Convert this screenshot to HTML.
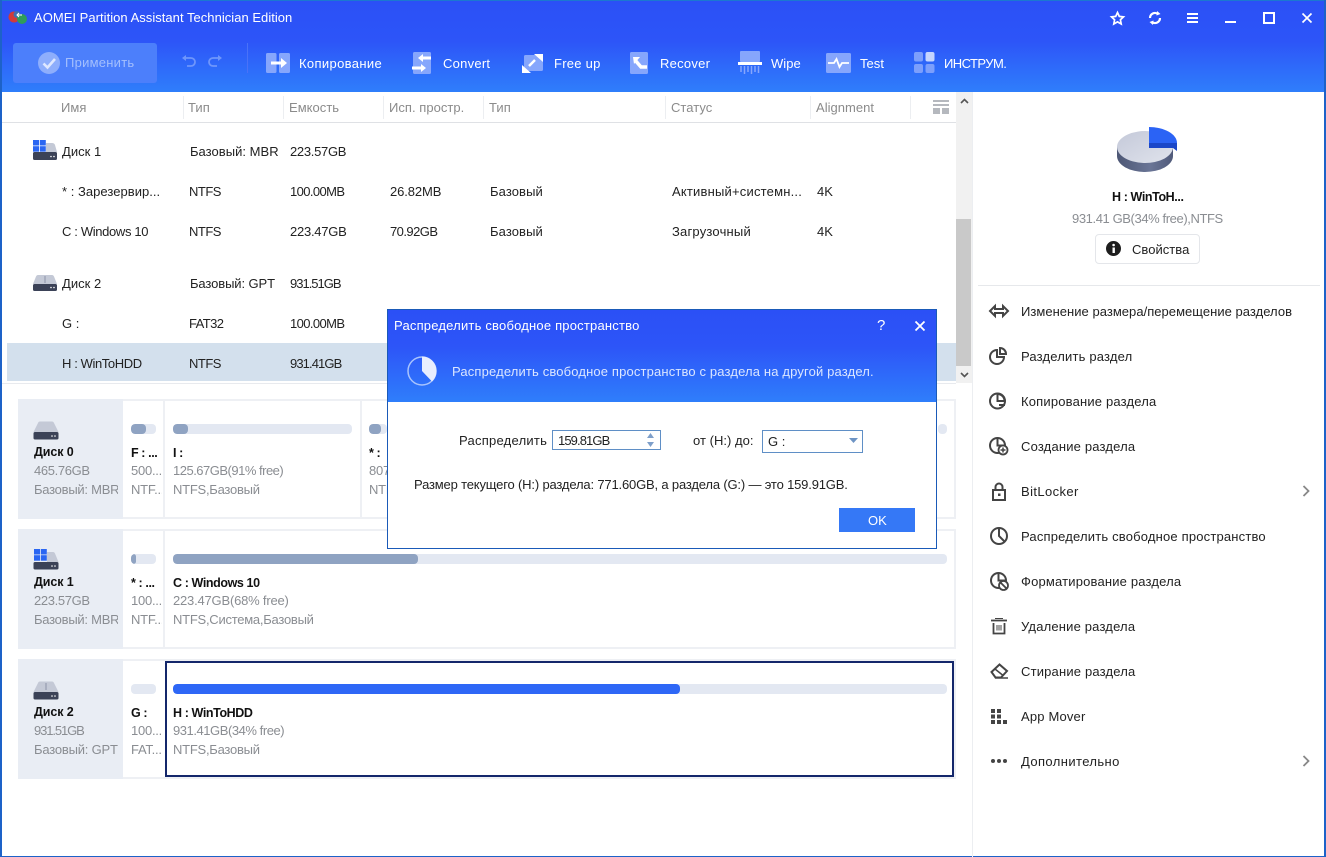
<!DOCTYPE html>
<html><head><meta charset="utf-8">
<style>
*{box-sizing:border-box;margin:0;padding:0}
html,body{width:1326px;height:857px;overflow:hidden;background:#fff}
body{position:relative;font-family:"Liberation Sans","Noto Sans CJK SC",sans-serif;font-size:13px;letter-spacing:.03px;color:#222}
.a{position:absolute}
.t{position:absolute;white-space:nowrap;line-height:16px;height:16px}
.w{color:#fff}
.tb{letter-spacing:.25px}
.h{color:#8b8b8b}
.g{color:#8a8d92;letter-spacing:-.25px}
.b{font-weight:bold;color:#111;font-size:12.5px;letter-spacing:-.1px}
.pb{font-weight:bold;color:#111;font-size:12.5px;letter-spacing:-.4px}
.r{letter-spacing:.18px}
.c{overflow:hidden}
svg{position:absolute;overflow:visible}
.sep{position:absolute;width:1px;background:#eceef1}
.bar{position:absolute;height:10px;border-radius:4px;background:#e3e8f2;overflow:hidden}
.bar i{position:absolute;left:0;top:0;bottom:0;background:#8fa3c2;border-radius:4px}
.ic{fill:none;stroke:#444;stroke-width:2}
</style></head><body>
<!-- header -->
<div class="a" style="left:0;top:0;width:1326px;height:92px;background:linear-gradient(#2b50f6,#2d55f8 45%,#2f7efb)"></div>
<div class="a" style="left:0;top:0;width:1326px;height:1px;background:#1b78d0"></div>
<div class="a" style="left:0;top:0;width:2px;height:857px;background:#1d62c8"></div>
<div class="a" style="right:0;top:0;width:2px;height:857px;background:#1d62c8"></div>
<div class="a" style="left:0;bottom:0;width:1326px;height:1px;background:#1d62c8"></div>
<!-- logo -->
<svg style="left:8px;top:10px" width="20" height="16"><circle cx="6" cy="7" r="5.500" fill="#d23a3a"/><circle cx="9" cy="4.500" r="3.500" fill="#3f6fb0"/><circle cx="14" cy="9" r="5" fill="#2f9c5a"/><path d="M9 5h5M11 3l-2 2 2 2" stroke="#fff" fill="none"/></svg>
<div class="t w" style="left:34px;top:10px">AOMEI Partition Assistant Technician Edition</div>
<!-- window controls -->
<svg style="left:1110px;top:11px" width="15" height="15" viewBox="0 0 15 15"><path d="M7.500 1.500l1.800 3.900 4.200.5-3.100 2.900.8 4.200-3.700-2.100-3.700 2.100.8-4.200L1.500 5.900l4.200-.5z" fill="none" stroke="#fff" stroke-width="1.700"/></svg>
<svg style="left:1147px;top:10px" width="16" height="16" viewBox="0 0 16 16"><path d="M3 8a5 5 0 0 1 8-4M13 8a5 5 0 0 1-8 4" fill="none" stroke="#fff" stroke-width="2.200"/><path d="M10 1l3.500 3-4 1.500zM6 15l-3.500-3 4-1.500z" fill="#fff"/></svg>
<div class="a" style="left:1187px;top:13px;width:11px;height:2px;background:#fff"></div>
<div class="a" style="left:1187px;top:17px;width:11px;height:2px;background:#fff"></div>
<div class="a" style="left:1187px;top:21px;width:11px;height:2px;background:#fff"></div>
<div class="a" style="left:1225px;top:21px;width:11px;height:2px;background:#fff"></div>
<div class="a" style="left:1263px;top:12px;width:12px;height:12px;border:2px solid #fff"></div>
<svg style="left:1302px;top:13px" width="10" height="10"><path d="M.5.5l9 9M9.500.5l-9 9" stroke="#fff" stroke-width="1.700"/></svg>
<!-- apply -->
<div class="a" style="left:13px;top:43px;width:144px;height:40px;background:#4c7ffb;border-radius:3px"></div>
<svg style="left:38px;top:52px" width="22" height="22"><circle cx="11" cy="11" r="11" fill="#8eaefc"/><path d="M5.500 11.500l4 4 7.500-8.500" fill="none" stroke="#dfe8ff" stroke-width="2.600"/></svg>
<div class="t tb" style="left:65px;top:55px;color:#a4bffd">Применить</div>
<svg style="left:181px;top:55px" width="16" height="14"><path d="M4 3h6a4 4 0 0 1 0 8H6" fill="none" stroke="#6f96fb" stroke-width="1.800"/><path d="M5 0L1 3l4 3z" fill="#6f96fb"/></svg>
<svg style="left:207px;top:55px" width="16" height="14"><path d="M12 3H6a4 4 0 0 0 0 8h4" fill="none" stroke="#6f96fb" stroke-width="1.800"/><path d="M11 0l4 3-4 3z" fill="#6f96fb"/></svg>
<div class="a" style="left:247px;top:43px;width:1px;height:30px;background:#4a72f8"></div>
<!-- toolbar -->
<svg style="left:266px;top:53px" width="24" height="20"><rect width="10.500" height="20" rx="1.500" fill="#86a6fc"/><rect x="13" width="11" height="20" rx="1.500" fill="#86a6fc"/><path d="M5 10h13" stroke="#fff" stroke-width="3"/><path d="M15 5l6 5-6 5z" fill="#fff"/></svg>
<div class="t w" style="left:299px;top:56px;letter-spacing:.35px">Копирование</div>
<svg style="left:412px;top:52px" width="20" height="22"><rect x="1" width="18" height="22" rx="1.500" fill="#86a6fc"/><path d="M10 6h9" stroke="#fff" stroke-width="3"/><path d="M11 2L6 6l5 4z" fill="#fff"/><path d="M0 16h10" stroke="#fff" stroke-width="3"/><path d="M9 12l5 4-5 4z" fill="#fff"/></svg>
<div class="t w tb" style="left:443px;top:56px">Convert</div>
<svg style="left:522px;top:53px" width="22" height="20"><rect x="2" y="2" width="19" height="16" rx="1.500" fill="#86a6fc"/><path d="M13 7l-6 6" stroke="#fff" stroke-width="2.500"/><path d="M12 1h9v8zM9 20H0v-8z" fill="#fff"/></svg>
<div class="t w tb" style="left:554px;top:56px">Free up</div>
<svg style="left:630px;top:52px" width="22" height="22"><rect width="18" height="22" rx="1.500" fill="#86a6fc"/><path d="M5 8l6 7h6" fill="none" stroke="#fff" stroke-width="3.500"/><path d="M3 5h7l-6 7z" fill="#fff"/></svg>
<div class="t w tb" style="left:660px;top:56px">Recover</div>
<svg style="left:738px;top:51px" width="24" height="24"><rect x="2" width="20" height="11" rx="1" fill="#86a6fc"/><rect y="11" width="24" height="3" fill="#fff"/><path d="M3 15v6M6.500 15v8M10 15v6M13.500 15v8M17 15v6M20.500 15v7" stroke="#86a6fc" stroke-width="1.500"/></svg>
<div class="t w" style="left:771px;top:56px">Wipe</div>
<svg style="left:826px;top:53px" width="25" height="20"><rect width="25" height="20" rx="1.500" fill="#86a6fc"/><path d="M2 10h6l2.500-4 3 8 2.500-4h7" fill="none" stroke="#fff" stroke-width="1.800"/></svg>
<div class="t w" style="left:860px;top:56px">Test</div>
<svg style="left:914px;top:52px" width="21" height="21"><rect width="9" height="9.500" rx="2" fill="#7c9ffc"/><rect x="11.500" width="9" height="9.500" rx="2" fill="#c5d5fe"/><rect y="12" width="9" height="9" rx="2" fill="#7c9ffc"/><rect x="11.500" y="12" width="9" height="9" rx="2" fill="#7c9ffc"/></svg>
<div class="t w" style="left:944px;top:56px;letter-spacing:-.55px">ИНСТРУМ.</div>
<!-- column header -->
<div class="t h" style="left:61px;top:100px">Имя</div>
<div class="t h" style="left:188px;top:100px">Тип</div>
<div class="t h" style="left:289px;top:100px">Емкость</div>
<div class="t h" style="left:389px;top:100px">Исп. простр.</div>
<div class="t h" style="left:489px;top:100px">Тип</div>
<div class="t h" style="left:671px;top:100px">Статус</div>
<div class="t h" style="left:816px;top:100px">Alignment</div>
<div class="sep" style="left:183px;top:96px;height:23px"></div>
<div class="sep" style="left:283px;top:96px;height:23px"></div>
<div class="sep" style="left:383px;top:96px;height:23px"></div>
<div class="sep" style="left:483px;top:96px;height:23px"></div>
<div class="sep" style="left:665px;top:96px;height:23px"></div>
<div class="sep" style="left:810px;top:96px;height:23px"></div>
<div class="sep" style="left:910px;top:96px;height:23px"></div>
<div class="a" style="left:2px;top:122px;width:954px;height:1px;background:#dfe1e5"></div>
<svg style="left:933px;top:100px" width="16" height="14"><path d="M0 1h16M0 5h16" stroke="#b5b8be" stroke-width="2"/><rect y="8" width="7" height="6" fill="#b5b8be"/><rect x="9" y="8" width="7" height="6" fill="#b5b8be"/></svg>
<!-- scrollbar -->
<div class="a" style="left:956px;top:92px;width:16px;height:291px;background:#f1f1f1"></div>
<div class="a" style="left:956px;top:219px;width:15px;height:147px;background:#c9c9c9"></div>
<svg style="left:960px;top:98px" width="9" height="6"><path d="M1 5l3.500-3.500L8 5" fill="none" stroke="#555" stroke-width="1.600"/></svg>
<svg style="left:960px;top:372px" width="9" height="6"><path d="M1 1l3.500 3.500L8 1" fill="none" stroke="#555" stroke-width="1.600"/></svg>
<div class="a" style="left:972px;top:92px;width:1px;height:765px;background:#eceef1"></div>
<!-- rows -->
<div class="a" style="left:7px;top:343px;width:949px;height:38px;background:#d3e0ed"></div>
<div class="a" style="left:2px;top:383px;width:954px;height:1px;background:#e8eaee"></div>
<svg style="left:33px;top:140px" width="25" height="21"><path d="M13 3h6c1.500 0 2.500.8 3 2l2 7H13z" fill="#c4c9d6"/><rect y="12" width="24" height="8" rx="1.500" fill="#3b4257"/><circle cx="18" cy="16.500" r=".8" fill="#fff"/><circle cx="21" cy="16.500" r=".8" fill="#fff"/><rect width="6" height="5.500" fill="#2a66f2"/><rect x="6.800" width="6" height="5.500" fill="#2a66f2"/><rect y="6.200" width="6" height="5.500" fill="#2a66f2"/><rect x="6.800" y="6.200" width="6" height="5.500" fill="#2a66f2"/></svg>
<div class="t" style="left:62px;top:144px">Диск 1</div>
<div class="t" style="left:190px;top:144px">Базовый: MBR</div>
<div class="t" style="left:290px;top:144px;letter-spacing:-.3px">223.57GB</div>
<div class="t" style="left:62px;top:184px">* : Зарезервир...</div>
<div class="t" style="left:189px;top:184px;letter-spacing:-.5px">NTFS</div>
<div class="t" style="left:290px;top:184px;letter-spacing:-.6px">100.00MB</div>
<div class="t" style="left:390px;top:184px;letter-spacing:-.1px">26.82MB</div>
<div class="t" style="left:490px;top:184px;letter-spacing:.1px">Базовый</div>
<div class="t" style="left:672px;top:184px;letter-spacing:.2px">Активный+системн...</div>
<div class="t" style="left:817px;top:184px">4K</div>
<div class="t" style="left:62px;top:224px;letter-spacing:-.35px">C : Windows 10</div>
<div class="t" style="left:189px;top:224px;letter-spacing:-.5px">NTFS</div>
<div class="t" style="left:290px;top:224px;letter-spacing:-.25px">223.47GB</div>
<div class="t" style="left:390px;top:224px;letter-spacing:-.55px">70.92GB</div>
<div class="t" style="left:490px;top:224px;letter-spacing:.1px">Базовый</div>
<div class="t" style="left:672px;top:224px;letter-spacing:.2px">Загрузочный</div>
<div class="t" style="left:817px;top:224px">4K</div>
<svg style="left:33px;top:275px" width="24" height="17"><path d="M5 0h14c1 0 1.500.5 2 1.500L24 9H0l3-7.500C3.500.5 4 0 5 0z" fill="#c4c9d6"/><rect y="9" width="24" height="7" rx="1.500" fill="#3b4257"/><circle cx="18" cy="12.500" r=".8" fill="#fff"/><circle cx="21" cy="12.500" r=".8" fill="#fff"/><path d="M12 1v7" stroke="#8b93a8"/></svg>
<div class="t" style="left:62px;top:276px">Диск 2</div>
<div class="t" style="left:190px;top:276px;letter-spacing:-.1px">Базовый: GPT</div>
<div class="t" style="left:290px;top:276px;letter-spacing:-1px">931.51GB</div>
<div class="t" style="left:62px;top:316px">G :</div>
<div class="t" style="left:189px;top:316px;letter-spacing:-.6px">FAT32</div>
<div class="t" style="left:290px;top:316px;letter-spacing:-.6px">100.00MB</div>
<div class="t" style="left:62px;top:356px;letter-spacing:-.4px">H : WinToHDD</div>
<div class="t" style="left:189px;top:356px;letter-spacing:-.5px">NTFS</div>
<div class="t" style="left:290px;top:356px;letter-spacing:-.9px">931.41GB</div>
<!-- disk cards -->
<div class="a" style="left:18px;top:399px;width:938px;height:120px;border:2px solid #eef0f4"></div>
<div class="a" style="left:18px;top:529px;width:938px;height:120px;border:2px solid #eef0f4"></div>
<div class="a" style="left:18px;top:659px;width:938px;height:120px;border:2px solid #eef0f4"></div>
<div class="a" style="left:18px;top:399px;width:105px;height:120px;background:#e9edf4"></div>
<div class="a" style="left:18px;top:529px;width:105px;height:120px;background:#e9edf4"></div>
<div class="a" style="left:18px;top:659px;width:105px;height:120px;background:#e9edf4"></div>
<div class="sep" style="left:163px;top:400px;height:118px;width:2px;background:#eef0f4"></div>
<div class="sep" style="left:360px;top:400px;height:118px;width:2px;background:#eef0f4"></div>
<div class="sep" style="left:163px;top:530px;height:118px;width:2px;background:#eef0f4"></div>
<!-- disk 0 -->
<svg style="left:33px;top:421px" width="26" height="19"><path d="M7 .5h12c1 0 1.600.5 2 1.500l4.500 9H.5L5 2c.4-1 1-1.500 2-1.500z" fill="#c4c9d6"/><rect x=".5" y="11" width="25" height="7.500" rx="1.500" fill="#3b4257"/><circle cx="19" cy="15" r=".8" fill="#fff"/><circle cx="22" cy="15" r=".8" fill="#fff"/></svg>
<div class="t b" style="left:34px;top:444px">Диск 0</div>
<div class="t g" style="left:34px;top:463px;letter-spacing:-.35px">465.76GB</div>
<div class="t g c" style="left:34px;top:482px;width:84px">Базовый: MBR</div>
<div class="bar" style="left:131px;top:424px;width:25px"><i style="width:15px"></i></div>
<div class="t pb c" style="left:131px;top:445px;width:30px">F : ...</div>
<div class="t g c" style="left:131px;top:463px;width:30px">500...</div>
<div class="t g c" style="left:131px;top:482px;width:31px">NTF...</div>
<div class="bar" style="left:173px;top:424px;width:179px"><i style="width:15px"></i></div>
<div class="t pb" style="left:173px;top:445px">I :</div>
<div class="t g" style="left:173px;top:463px;letter-spacing:-.5px">125.67GB(91% free)</div>
<div class="t g" style="left:173px;top:482px">NTFS,Базовый</div>
<div class="bar" style="left:369px;top:424px;width:18px"><i style="width:12px"></i></div>
<div class="t pb" style="left:369px;top:445px">* :</div>
<div class="t g" style="left:369px;top:463px">807</div>
<div class="t g" style="left:369px;top:482px">NTF</div>
<div class="bar" style="left:938px;top:424px;width:9px"></div>
<!-- disk 1 -->
<svg style="left:33px;top:549px" width="26" height="21"><path d="M14 3h6c1 0 1.600.5 2 1.500l3.500 8.500H14z" fill="#c4c9d6"/><rect x=".5" y="13" width="25" height="7.500" rx="1.500" fill="#3b4257"/><circle cx="19" cy="17" r=".8" fill="#fff"/><circle cx="22" cy="17" r=".8" fill="#fff"/><rect x="1" width="6" height="5.500" fill="#2a66f2"/><rect x="7.800" width="6" height="5.500" fill="#2a66f2"/><rect x="1" y="6.200" width="6" height="5.500" fill="#2a66f2"/><rect x="7.800" y="6.200" width="6" height="5.500" fill="#2a66f2"/></svg>
<div class="t b" style="left:34px;top:574px">Диск 1</div>
<div class="t g" style="left:34px;top:593px;letter-spacing:-.35px">223.57GB</div>
<div class="t g c" style="left:34px;top:612px;width:84px">Базовый: MBR</div>
<div class="bar" style="left:131px;top:554px;width:25px"><i style="width:5px"></i></div>
<div class="t pb c" style="left:131px;top:575px;width:30px">* : ...</div>
<div class="t g c" style="left:131px;top:593px;width:30px">100....</div>
<div class="t g c" style="left:131px;top:612px;width:31px">NTF...</div>
<div class="bar" style="left:173px;top:554px;width:774px"><i style="width:245px"></i></div>
<div class="t pb" style="left:173px;top:575px">C : Windows 10</div>
<div class="t g" style="left:173px;top:593px;letter-spacing:-.2px">223.47GB(68% free)</div>
<div class="t g" style="left:173px;top:612px">NTFS,Система,Базовый</div>
<!-- disk 2 -->
<svg style="left:33px;top:681px" width="26" height="19"><path d="M7 .5h12c1 0 1.600.5 2 1.500l4.500 9H.5L5 2c.4-1 1-1.500 2-1.500z" fill="#c4c9d6"/><rect x=".5" y="11" width="25" height="7.500" rx="1.500" fill="#3b4257"/><circle cx="19" cy="15" r=".8" fill="#fff"/><circle cx="22" cy="15" r=".8" fill="#fff"/><path d="M13 2v7" stroke="#8b93a8"/></svg>
<div class="t b" style="left:34px;top:704px">Диск 2</div>
<div class="t g" style="left:34px;top:723px;letter-spacing:-1.1px">931.51GB</div>
<div class="t g c" style="left:34px;top:742px;width:86px;letter-spacing:-.2px">Базовый: GPT</div>
<div class="bar" style="left:131px;top:684px;width:25px"></div>
<div class="t pb" style="left:131px;top:705px">G :</div>
<div class="t g c" style="left:131px;top:723px;width:30px">100....</div>
<div class="t g c" style="left:131px;top:742px;width:30px">FAT...</div>
<div class="a" style="left:165px;top:661px;width:789px;height:116px;border:2px solid #14276b;background:#fff"></div>
<div class="bar" style="left:173px;top:684px;width:774px"><i style="width:507px;background:#2e67f6"></i></div>
<div class="t pb" style="left:173px;top:705px">H : WinToHDD</div>
<div class="t g" style="left:173px;top:723px;letter-spacing:-.45px">931.41GB(34% free)</div>
<div class="t g" style="left:173px;top:742px">NTFS,Базовый</div>
<!-- right panel -->
<svg style="left:1116px;top:126px" width="62" height="48" viewBox="0 0 62 48"><defs><linearGradient id="pb" x1="0" x2="1" y1="0" y2="0"><stop offset="0" stop-color="#4d5775"/><stop offset=".6" stop-color="#6a7596"/><stop offset="1" stop-color="#505a7a"/></linearGradient><linearGradient id="pt" x1="0" x2="1" y1="0" y2="1"><stop offset="0" stop-color="#c4c9d9"/><stop offset="1" stop-color="#e0e3ec"/></linearGradient></defs><path d="M1 21v9a28 16 0 0 0 56 0v-9z" fill="url(#pb)"/><path d="M33 5.200A28 16 0 1 0 57 21H33z" fill="url(#pt)"/><path d="M33 1C48 1 61 8 61 17H33z" fill="#2b63f5"/><path d="M33 17H61v8l-4-3H33z" fill="#1b47c8"/></svg>
<div class="t pb" style="left:1112px;top:189px">H : WinToH...</div>
<div class="t g" style="left:1072px;top:211px;letter-spacing:-.4px">931.41 GB(34% free),NTFS</div>
<div class="a" style="left:1095px;top:234px;width:105px;height:30px;border:1px solid #e4e6ea;border-radius:4px"></div>
<svg style="left:1106px;top:241px" width="15" height="15"><circle cx="7.500" cy="7.500" r="7.500" fill="#1e1e1e"/><rect x="6.500" y="6.500" width="2.400" height="5.500" fill="#fff"/><circle cx="7.600" cy="4" r="1.300" fill="#fff"/></svg>
<div class="t" style="left:1132px;top:242px">Свойства</div>
<div class="a" style="left:978px;top:285px;width:342px;height:1px;background:#e6e8eb"></div>
<svg style="left:989px;top:303px" width="20" height="16"><path d="M6 3L1 8l5 5V10h8v3l5-5-5-5v3H6z" fill="none" stroke="#444" stroke-width="2"/></svg>
<div class="t" style="left:1021px;top:304px">Изменение размера/перемещение разделов</div>
<svg style="left:989px;top:347px" width="18" height="18"><path d="M8 3a7 7 0 1 0 7 7H8z" class="ic"/><path d="M11 1a6 6 0 0 1 6 6h-6z" class="ic"/></svg>
<div class="t r" style="left:1021px;top:349px">Разделить раздел</div>
<svg style="left:989px;top:392px" width="18" height="18"><circle cx="8.500" cy="9" r="7.500" class="ic"/><path d="M8.500 2a7 7 0 0 1 7 7h-7z" class="ic"/><path d="M10 13h6" stroke="#444" stroke-width="2"/></svg>
<div class="t r" style="left:1021px;top:394px">Копирование раздела</div>
<svg style="left:989px;top:437px" width="20" height="18"><circle cx="8.500" cy="8.500" r="7.500" class="ic"/><path d="M8.500 1v7.500H16" class="ic"/><circle cx="14" cy="13" r="4.500" fill="#fff" stroke="#444" stroke-width="1.800"/><path d="M14 10.500v5M11.500 13h5" stroke="#444" stroke-width="1.500"/></svg>
<div class="t r" style="left:1021px;top:439px">Создание раздела</div>
<svg style="left:992px;top:482px" width="14" height="19"><rect x="1" y="8" width="12" height="10" class="ic"/><path d="M3.500 8V5a3.500 3.500 0 0 1 7 0v3" class="ic"/><rect x="6" y="11.500" width="2.500" height="2.500" fill="#444"/></svg>
<div class="t" style="left:1021px;top:484px;letter-spacing:.4px">BitLocker</div>
<svg style="left:1302px;top:485px" width="8" height="12"><path d="M1.500 1l5 5-5 5" fill="none" stroke="#888" stroke-width="1.800"/></svg>
<svg style="left:990px;top:527px" width="18" height="18"><circle cx="9" cy="9" r="8" class="ic"/><path d="M9 1v8l5.500 5.500" class="ic"/></svg>
<div class="t r" style="left:1021px;top:529px">Распределить свободное пространство</div>
<svg style="left:990px;top:572px" width="19" height="19"><circle cx="8.500" cy="8.500" r="7.500" class="ic"/><path d="M8.500 1v7.500H16" class="ic"/><circle cx="13.500" cy="13.500" r="4.500" fill="#fff" stroke="#444" stroke-width="1.800"/><path d="M10.500 10.500l6 6" stroke="#444" stroke-width="1.800"/></svg>
<div class="t r" style="left:1021px;top:574px">Форматирование раздела</div>
<svg style="left:991px;top:618px" width="16" height="17"><path d="M0 2.500h16" stroke="#444" stroke-width="1.800"/><path d="M4 .5h8" stroke="#444"/><path d="M2.500 5v10.500h11V5" fill="none" stroke="#444" stroke-width="1.800"/><path d="M6 7v5.500M8 7v5.500M10 7v5.500" stroke="#444"/></svg>
<div class="t r" style="left:1021px;top:619px">Удаление раздела</div>
<svg style="left:990px;top:663px" width="19" height="16"><path d="M1.500 9L9.500 1.500 17 8l-6 6.500H5.500z" class="ic"/><path d="M5 6l7.500 6" stroke="#444" stroke-width="1.500"/><path d="M5 15h13" stroke="#444" stroke-width="1.500"/></svg>
<div class="t r" style="left:1021px;top:664px">Стирание раздела</div>
<svg style="left:991px;top:709px" width="16" height="15" fill="#444"><rect width="4" height="4"/><rect x="6" width="4" height="4"/><rect y="5.500" width="4" height="4"/><rect x="6" y="5.500" width="4" height="4"/><rect y="11" width="4" height="4"/><rect x="6" y="11" width="4" height="4"/><rect x="12" y="11" width="4" height="4"/></svg>
<div class="t r" style="left:1021px;top:709px">App Mover</div>
<svg style="left:991px;top:759px" width="16" height="4" fill="#444"><circle cx="2" cy="2" r="2"/><circle cx="8" cy="2" r="2"/><circle cx="14" cy="2" r="2"/></svg>
<div class="t" style="left:1021px;top:754px;letter-spacing:.4px">Дополнительно</div>
<svg style="left:1302px;top:755px" width="8" height="12"><path d="M1.500 1l5 5-5 5" fill="none" stroke="#888" stroke-width="1.800"/></svg>
<!-- dialog -->
<div class="a" style="left:387px;top:309px;width:550px;height:240px;background:#fff;border:1px solid #1a5ab8"></div>
<div class="a" style="left:388px;top:310px;width:548px;height:92px;background:linear-gradient(#2b50f6,#2d55f8 40%,#2f7efb)"></div>
<div class="t w" style="left:394px;top:318px;letter-spacing:.2px">Распределить свободное пространство</div>
<div class="t w" style="left:877px;top:318px;font-size:15px">?</div>
<svg style="left:915px;top:321px" width="10" height="10"><path d="M.5.5l9 9M9.500.5l-9 9" stroke="#fff" stroke-width="1.800"/></svg>
<svg style="left:406px;top:355px" width="32" height="32" viewBox="0 0 32 32"><circle cx="16" cy="16" r="14" fill="none" stroke="#a9c4fd" stroke-width="1.500"/><path d="M16 1.500A14.500 14.500 0 0 1 26 26.500L16 16z" fill="#e8eefe"/></svg>
<div class="t" style="left:452px;top:364px;color:#dbe6ff;letter-spacing:.15px">Распределить свободное пространство с раздела на другой раздел.</div>
<div class="t" style="left:459px;top:433px;letter-spacing:.25px">Распределить</div>
<div class="a" style="left:552px;top:430px;width:109px;height:20px;border:1px solid #5f8fc6"></div>
<div class="t" style="left:558px;top:433px;letter-spacing:-.9px">159.81GB</div>
<svg style="left:647px;top:433px" width="7" height="14"><path d="M3.500 0L7 5H0zM3.500 14L7 9H0z" fill="#7e9fca"/></svg>
<div class="t" style="left:693px;top:433px">от (H:) до:</div>
<div class="a" style="left:762px;top:430px;width:101px;height:23px;border:1px solid #5f8fc6"></div>
<div class="t" style="left:768px;top:434px">G :</div>
<svg style="left:849px;top:438px" width="9" height="5"><path d="M0 0h9L4.500 5z" fill="#6e94c4"/></svg>
<div class="t" style="left:414px;top:477px;letter-spacing:-.17px">Размер текущего (H:) раздела: 771.60GB, а раздела (G:) — это 159.91GB.</div>
<div class="a" style="left:839px;top:508px;width:76px;height:24px;background:#3578f6"></div>
<div class="t w" style="left:868px;top:513px">OK</div>
</body></html>
